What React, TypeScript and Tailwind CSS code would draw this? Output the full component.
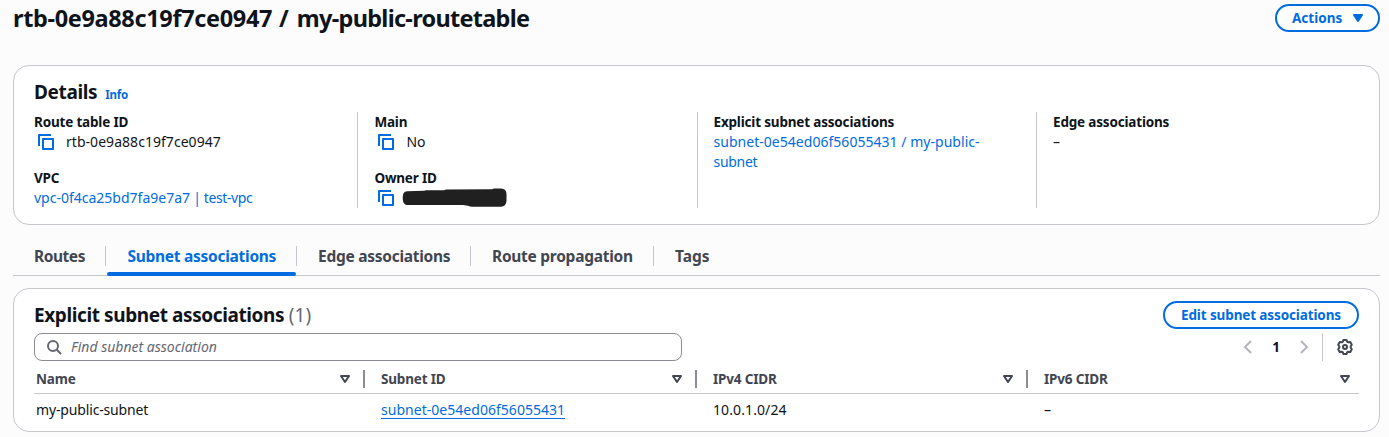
import type { ReactNode } from 'react';

function CopyIcon() {
  return (
    <svg className="ml-1 mt-[2px] size-4 shrink-0" viewBox="0 0 16 16" fill="none" stroke="#006ce0" strokeWidth="2">
      <path d="M1 12V1h12" strokeLinejoin="round" />
      <path d="M5 5h10v10H5z" strokeLinejoin="round" />
    </svg>
  );
}

function SortIcon() {
  return (
    <svg className="size-4 shrink-0" viewBox="0 0 16 16" fill="none" stroke="#424650" strokeWidth="2">
      <path d="M4 5h8l-4 6z" strokeLinejoin="round" />
    </svg>
  );
}

function Field({ label, children }: { label: string; children: ReactNode }) {
  return (
    <div className="whitespace-nowrap leading-5">
      <div className="text-[13.5px] font-bold tracking-[-0.18px]">{label}</div>
      <div className="flex">{children}</div>
    </div>
  );
}

function HeaderCell({ label, last, className }: { label: string; last?: boolean; className: string }) {
  return (
    <div className={`flex h-[18px] items-center justify-between ${last ? 'pr-[6px]' : 'border-r-2 border-[#8c8c94] pr-[10px]'} ${className}`}>
      <span className="text-[13.5px] font-bold tracking-[-0.18px] text-[#424650]">{label}</span>
      <SortIcon />
    </div>
  );
}

export default function App() {
  return (
    <div className="flex h-[437px] w-[1389px] flex-col overflow-hidden whitespace-nowrap bg-[#fcfcfd] pl-[13px] pr-[9px] font-['Noto_Sans',sans-serif] text-[14px] leading-5 text-[#0f141a]">
      <header className="flex h-[65px] items-start justify-between">
        <h1 className="mt-[3px] text-[23.5px] font-bold leading-[30px]">
          <span className="tracking-[-0.35px]">rtb-0e9a88c19f7ce0947</span>
          <span className="ml-[7px] mr-[8px]">/</span>
          <span className="tracking-[-0.72px]">my-public-routetable</span>
        </h1>
        <button className="mt-1 flex h-7 w-[105px] items-center gap-2 rounded-full border-2 border-[#006ce0] bg-white pl-[15px] text-[13.5px] font-bold text-[#006ce0]">
          Actions
          <svg className="size-4" viewBox="0 0 16 16" fill="#006ce0" stroke="#006ce0" strokeWidth="2" strokeLinejoin="round">
            <path d="M4 5h8l-4 6z" />
          </svg>
        </button>
      </header>

      <section className="h-[160px] rounded-2xl border border-[#c6c6cd] bg-white pl-5 pr-5 pt-[14px]">
        <div className="flex h-8 items-baseline gap-2">
          <h2 className="text-[19px] font-bold leading-6 tracking-[-0.36px]">Details</h2>
          <a className="text-[11.5px] font-bold leading-4 tracking-[-0.2px] text-[#006ce0]">Info</a>
        </div>
        <div className="flex h-24">
          <div className="flex w-[324px] flex-col gap-4 border-r border-[#c6c6cd]">
            <Field label="Route table ID">
              <CopyIcon />
              <span className="ml-3 tracking-[0.04px]">rtb-0e9a88c19f7ce0947</span>
            </Field>
            <Field label="VPC">
              <a className="text-[#006ce0]">
                vpc-0f4ca25bd7fa9e7a7<span className="tracking-[-0.4px]"> | test-vpc</span>
              </a>
            </Field>
          </div>
          <div className="flex w-[340px] flex-col gap-4 border-r border-[#c6c6cd] pl-[16.4px]">
            <Field label="Main">
              <CopyIcon />
              <span className="ml-3">No</span>
            </Field>
            <Field label="Owner ID">
              <CopyIcon />
              <svg className="ml-2 h-5 w-[106px]" viewBox="0 0 106 20" fill="#202020">
                <path d="M5 3.200L22 2.800L24 2.200H42L44 1.400L90 1.200L92 .5H99Q104.500 .7 104.500 6V13Q104 18.600 99 18.800H70Q68 18.800 66 17.700L61 17H5Q.7 16.500 .7 10Q.5 3.500 5 3.200Z" />
              </svg>
            </Field>
          </div>
          <div className="w-[339px] border-r border-[#c6c6cd] pl-[15.5px]">
            <Field label="Explicit subnet associations">
              <a className="text-[#006ce0]">
                <span className="tracking-[0.03px]">subnet-0e54ed06f56055431 / my-public-</span>
                <br />
                <span className="tracking-[-0.3px]">subnet</span>
              </a>
            </Field>
          </div>
          <div className="pl-4">
            <Field label="Edge associations">–</Field>
          </div>
        </div>
      </section>

      <nav className="mt-5 flex h-[31px] items-start border-b border-[#c6c6cd] pl-[21px] pt-px text-[15.5px] font-bold leading-5 tracking-[-0.27px] text-[#424650]">
        <span className="h-5 w-[72px] border-r border-[#c6c6cd] tracking-[-0.45px]">Routes</span>
        <span className="ml-px flex h-[29px] w-[190px] flex-col justify-between">
          <span className="h-5 border-r border-[#c6c6cd] pl-[20.4px] text-[#006ce0]">Subnet associations</span>
          <span className="mr-px -mb-px h-1 rounded-[2px] bg-[#006ce0]" />
        </span>
        <span className="h-5 w-[174px] border-r border-[#c6c6cd] pl-[21px]">Edge associations</span>
        <span className="h-5 w-[183px] border-r border-[#c6c6cd] pl-[21px]">Route propagation</span>
        <span className="pl-[21px] tracking-normal">Tags</span>
      </nav>

      <section className="mt-3 h-[144px] shrink-0 rounded-2xl border border-[#c6c6cd] bg-white px-5">
        <div className="flex h-11 items-start justify-between pt-3">
          <h2 className="mt-[2px] text-[19px] font-bold leading-6 tracking-[-0.4px]">
            Explicit subnet associations <span className="font-normal tracking-[0.1px] text-[#656871]">(1)</span>
          </h2>
          <button className="flex h-7 w-[196px] items-center justify-center rounded-full border-2 border-[#006ce0] bg-white text-[13.5px] font-bold tracking-[-0.12px] text-[#006ce0]">
            Edit subnet associations
          </button>
        </div>
        <div className="flex h-7 items-center">
          <div className="flex h-7 w-[648px] items-center rounded-lg border border-[#8c8c94] pl-[11px]">
            <svg className="size-4" viewBox="0 0 16 16" fill="none" stroke="#656871" strokeWidth="2">
              <circle cx="7" cy="7" r="5" />
              <path d="m10.500 10.500 4.500 4.500" />
            </svg>
            <span className="ml-[9px] italic text-[#656871]">Find subnet association</span>
          </div>
          <div className="ml-auto flex h-7 items-center">
            <svg className="size-4" viewBox="0 0 16 16" fill="none" stroke="#b4b4bb" strokeWidth="2">
              <path d="m11 2-6 6 6 6" />
            </svg>
            <span className="w-10 text-center text-[13.5px] font-bold">1</span>
            <svg className="size-4" viewBox="0 0 16 16" fill="none" stroke="#b4b4bb" strokeWidth="2">
              <path d="m5 2 6 6-6 6" />
            </svg>
            <span className="ml-[10px] mr-[14px] h-7 w-px bg-[#c6c6cd]" />
            <svg className="mr-[6px] size-4" viewBox="0 0 16 16" fill="none" stroke="#424650" strokeWidth="2" strokeLinejoin="round">
              <path d="M6.500 1h3l.8 1.800 1 .5 2-.2 1.500 2.600L13.700 7.300v1.400l1.100 1.600-1.500 2.600-2-.2-1 .5-.8 1.800h-3l-.8-1.800-1-.5-2 .2-1.500-2.600L2.300 8.700V7.300L1.200 5.700l1.500-2.600 2 .2 1-.5z" />
              <circle cx="8" cy="8" r="2" />
            </svg>
          </div>
        </div>
        <div className="flex h-[33px] items-center border-b border-[#c6c6cd] pb-px pt-1">
          <HeaderCell label="Name" className="w-[331px] pl-[2px]" />
          <HeaderCell label="Subnet ID" className="w-[332px] pl-4" />
          <HeaderCell label="IPv4 CIDR" className="w-[331px] pl-4" />
          <HeaderCell label="IPv6 CIDR" className="flex-1 pl-4" last />
        </div>
        <div className="flex h-8 items-center">
          <span className="w-[331px] pl-[2px] tracking-[-0.15px]">my-public-subnet</span>
          <span className="w-[332px] pl-4">
            <a className="inline-block h-[18px] border-b border-[#006ce0] leading-[18px] tracking-[0.03px] text-[#006ce0]">subnet-0e54ed06f56055431</a>
          </span>
          <span className="w-[331px] pl-4 tracking-[0.1px]">10.0.1.0/24</span>
          <span className="pl-4">–</span>
        </div>
      </section>
    </div>
  );
}
